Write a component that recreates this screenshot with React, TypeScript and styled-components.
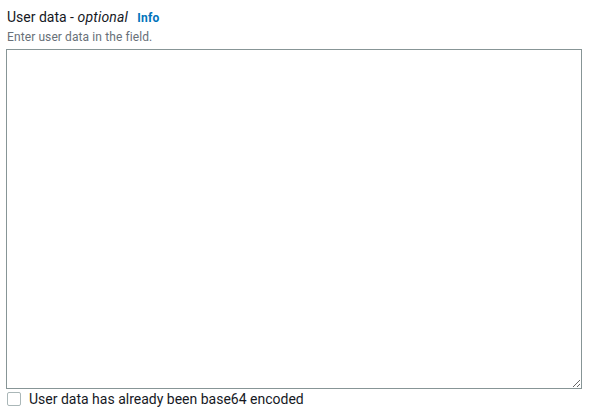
import React from "react";
import styled, { createGlobalStyle } from "styled-components";

const Global = createGlobalStyle`
  html, body { margin: 0; padding: 0; background: #fff; }
  body { font-family: Roboto, "Noto Sans", Arial, sans-serif; color: #16191f; }
`;

const Field = styled.div`
  display: flex;
  flex-direction: column;
  padding: 6px 12px 0 6px;
  width: 576px;
`;

const Label = styled.div`
  display: flex;
  align-items: baseline;
  gap: 9px;
  font-size: 14px;
  line-height: 22px;
  color: #16191f;
  padding-left: 1px;
`;

const Optional = styled.i`
  font-style: italic;
  letter-spacing: 0.2px;
`;

const InfoLink = styled.a`
  font-size: 12px;
  font-weight: 700;
  color: #0073bb;
  text-decoration: none;
  letter-spacing: 0.3px;
`;

const Description = styled.div`
  font-size: 12px;
  line-height: 16px;
  color: #687078;
  padding-left: 1px;
  letter-spacing: 0.1px;
`;

const TextArea = styled.textarea`
  box-sizing: border-box;
  margin-top: 4px;
  width: 576px;
  height: 340px;
  border: 1px solid #879596;
  border-radius: 0;
  padding: 4px 8px;
  font-family: inherit;
  font-size: 14px;
  resize: vertical;
  outline: none;
`;

const CheckRow = styled.label`
  display: flex;
  align-items: center;
  gap: 8px;
  margin-top: 0px;
  font-size: 14px;
  line-height: 20px;
  color: #16191f;
  padding-left: 1px;
`;

const Box = styled.span`
  box-sizing: border-box;
  width: 14px;
  height: 14px;
  border: 1px solid #aab7b8;
  border-radius: 2px;
  background: #fff;
`;

export default function App() {
  return (
    <>
      <Global />
      <Field>
        <Label>
          <span>
            User data - <Optional>optional</Optional>
          </span>
          <InfoLink href="#">Info</InfoLink>
        </Label>
        <Description>Enter user data in the field.</Description>
        <TextArea />
        <CheckRow>
          <Box />
          <span>User data has already been base64 encoded</span>
        </CheckRow>
      </Field>
    </>
  );
}
